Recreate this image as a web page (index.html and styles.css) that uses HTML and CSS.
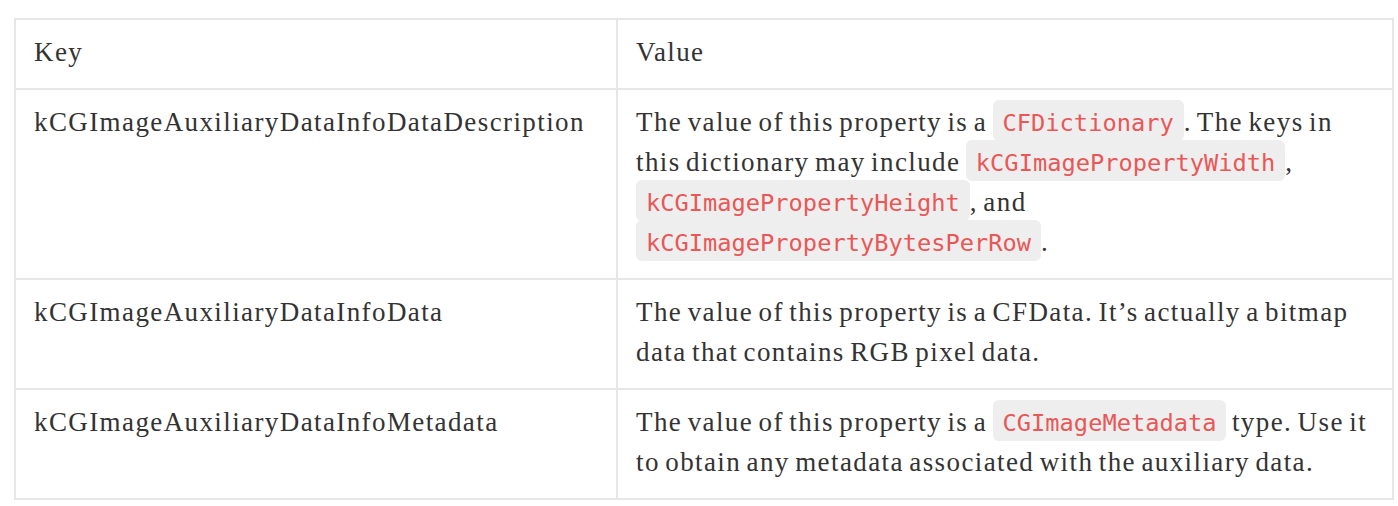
FILE: index.html
```html
<!DOCTYPE html>
<html>
<head>
<meta charset="utf-8">
<link rel="stylesheet" href="styles.css">
</head>
<body>
<div class="page">
  <table class="props">
    <colgroup>
      <col class="col-key">
      <col class="col-value">
    </colgroup>
    <thead>
      <tr><th>Key</th><th>Value</th></tr>
    </thead>
    <tbody>
      <tr>
        <td>kCGImageAuxiliaryDataInfoDataDescription</td>
        <td>The value of this property is a <code>CFDictionary</code>. The keys in this dictionary may include <code>kCGImagePropertyWidth</code>, <code>kCGImagePropertyHeight</code>, and <code>kCGImagePropertyBytesPerRow</code>.</td>
      </tr>
      <tr>
        <td>kCGImageAuxiliaryDataInfoData</td>
        <td>The value of this property is a CFData. It’s actually a bitmap data that contains RGB pixel data.</td>
      </tr>
      <tr>
        <td>kCGImageAuxiliaryDataInfoMetadata</td>
        <td>The value of this property is a <code>CGImageMetadata</code> type. Use it to obtain any metadata associated with the auxiliary data.</td>
      </tr>
    </tbody>
  </table>
</div>
</body>
</html>
```
FILE: styles.css
```css
html, body {
  margin: 0;
  padding: 0;
  background: #ffffff;
}

.page {
  padding: 18px 4px 0 14px;
}

.props {
  width: 1380px;
  border-collapse: collapse;
  table-layout: fixed;
  font-family: "Liberation Serif", "Times New Roman", serif;
  font-size: 27px;
  letter-spacing: 1.4px;
  word-spacing: -2.7px;
  line-height: 40px;
  color: #333333;
}

.col-key {
  width: 602px;
}

.props th,
.props td {
  border: 2px solid #e7e7e7;
  padding: 12px 18px 16px;
  text-align: left;
  vertical-align: top;
  font-weight: normal;
}

.props code {
  font-family: "DejaVu Sans Mono", Menlo, monospace;
  font-size: 23.7px;
  line-height: 1;
  letter-spacing: 0;
  word-spacing: 0;
  color: #e95757;
  background: #eeeeee;
  border-radius: 6px;
  padding: 9px 10px 4px;
}
```
